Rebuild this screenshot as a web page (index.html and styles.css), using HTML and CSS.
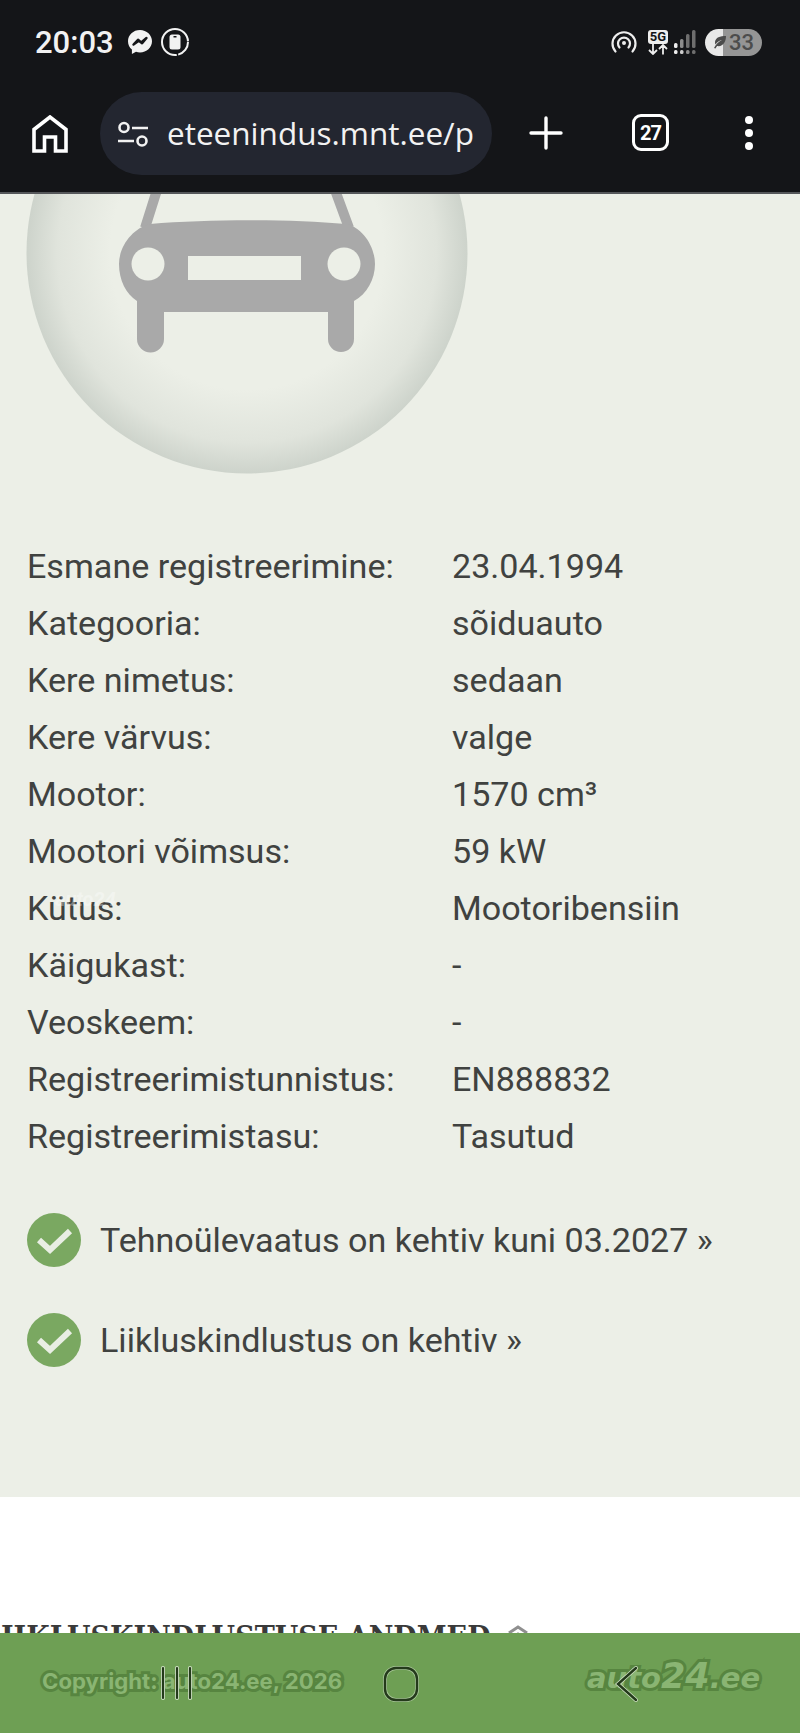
FILE: index.html
```html
<!DOCTYPE html>
<html>
<head>
  <title>auto24.ee</title>
  <link rel="stylesheet" href="styles.css">
</head>
<body>
  <div class="page">

    <header class="phone-top">
      <div class="status-bar">
        <span class="clock">20:03</span>
        <svg class="status-messenger" width="26" height="26" viewBox="0 0 26 26">
          <path fill="#f2f2f2" d="M13 1C6.300 1 1 5.900 1 12.300c0 3.400 1.500 6.300 3.900 8.300V25l4.100-2.200c1.300.4 2.600.6 4 .6 6.700 0 12-4.900 12-11.100S19.700 1 13 1z"/>
          <path fill="none" stroke="#141518" stroke-width="2.400" stroke-linejoin="round" stroke-linecap="round" d="M6.500 15.500l4.500-4.800 3.200 2.800 5.300-4.500-4.400 5.300-3.300-2.600z"/>
        </svg>
        <svg class="status-record" width="30" height="30" viewBox="0 0 30 30">
          <circle cx="15" cy="15" r="13" fill="none" stroke="#f2f2f2" stroke-width="2" stroke-dasharray="17 1.500 62 1.500"/>
          <rect x="9.500" y="7.500" width="11" height="15" rx="2.500" fill="#f2f2f2"/>
          <rect x="13.500" y="9" width="3" height="1.500" fill="#141518"/>
        </svg>
        <span class="status-spacer"></span>
        <svg class="status-hotspot" width="26" height="24" viewBox="0 0 26 24">
          <g fill="none" stroke="#eeeeee" stroke-width="2.200" stroke-linecap="round">
            <path d="M4.500 21.500a11.500 11.500 0 1 1 17 0"/>
            <path d="M8.500 17.500a6 6 0 1 1 9 0"/>
          </g>
          <circle cx="13" cy="13" r="2" fill="#eeeeee"/>
        </svg>
        <div class="status-5g">
          <span class="tag-5g">5G</span>
          <svg width="24" height="11" viewBox="0 0 24 11">
            <path fill="none" stroke="#eeeeee" stroke-width="1.800" d="M7 0v9.500M3 6l4 4 4-4M17 10.500V1.500M13 5l4-4 4 4"/>
          </svg>
        </div>
        <svg class="status-signal" width="24" height="26" viewBox="0 0 24 26">
          <rect x="1" y="14" width="3.500" height="5" rx="1.500" fill="#eeeeee"/>
          <rect x="1" y="21" width="3.500" height="4" rx="1.500" fill="#eeeeee"/>
          <rect x="7" y="10" width="3.500" height="9" rx="1.500" fill="#8c8c8c"/>
          <rect x="7" y="21" width="3.500" height="4" rx="1.500" fill="#cccccc"/>
          <rect x="13" y="5" width="3.500" height="14" rx="1.500" fill="#6e6e6e"/>
          <rect x="13" y="21" width="3.500" height="4" rx="1.500" fill="#8c8c8c"/>
          <rect x="19" y="1" width="3.500" height="18" rx="1.500" fill="#6e6e6e"/>
          <rect x="19" y="21" width="3.500" height="4" rx="1.500" fill="#6e6e6e"/>
        </svg>
        <div class="battery">
          <svg class="battery-leaf" width="15" height="14" viewBox="0 0 15 14">
            <path fill="#4c4c4c" d="M14 1C8 1 3.500 2.500 3 7c-.1 1 .2 2 .6 2.600C5 7 7.500 5.500 10 5 7 6.500 4 9 2 13l1.500.6c.5-1 1-1.900 1.600-2.600C11 12 14 7 14 1z"/>
          </svg>
          <span class="battery-level">33</span>
        </div>
      </div>

      <div class="toolbar">
        <svg class="tool-home" width="36" height="38" viewBox="0 0 36 38">
          <path fill="none" stroke="#fff" stroke-width="3.600" d="M2 36V14.500L18 2l16 12.500V36H23.500V22h-11v14z"/>
        </svg>
        <div class="url-bar">
          <svg class="url-tune" width="32" height="26" viewBox="0 0 32 26">
            <g fill="none" stroke="#f2f2f2" stroke-width="2.600">
              <circle cx="7" cy="6.500" r="4.500"/>
              <path d="M15 7h16M1 20h16"/>
              <circle cx="25" cy="20" r="4.500"/>
            </g>
          </svg>
          <span class="url-text">eteenindus.mnt.ee/p</span>
        </div>
        <svg class="tool-plus" width="34" height="34" viewBox="0 0 34 34">
          <path stroke="#fff" stroke-width="3.400" stroke-linecap="round" d="M17 2v30M2 17h30"/>
        </svg>
        <div class="tab-count">27</div>
        <div class="tool-menu">
          <span></span><span></span><span></span>
        </div>
      </div>
    </header>

    <main class="content">
      <section class="vehicle">
        <svg class="vehicle-picture" width="500" height="300" viewBox="0 194 500 300">
          <defs>
            <radialGradient id="discShade" cx="247" cy="253" r="220.500" gradientUnits="userSpaceOnUse">
              <stop offset="0.62" stop-color="#ecefe7"/>
              <stop offset="0.86" stop-color="#e0e4dc"/>
              <stop offset="1" stop-color="#cdd3cb"/>
            </radialGradient>
          </defs>
          <circle cx="247" cy="253" r="220.500" fill="url(#discShade)"/>
          <path fill="none" stroke="#a9a9a9" stroke-width="10" d="M145 228l12-38M349 228l-14-38"/>
          <path fill="#a9a9a9" d="M150 224c60-5 140-5 196 0 16 3 29 22 29 40 0 15-8 30-21 37v38a13 13 0 0 1-26 0v-27H164v27a13.500 13.500 0 0 1-27 0v-38c-11-7-18-21-18-37 0-18 14-36 31-40z"/>
          <circle cx="148" cy="264" r="16.500" fill="#ecefe7"/>
          <circle cx="344" cy="264" r="16.500" fill="#ecefe7"/>
          <rect x="188" y="256" width="113" height="24" fill="#ecefe7"/>
        </svg>

        <div class="specs">
          <span class="watermark">auto24</span>
          <div class="spec-row"><span>Esmane registreerimine:</span><span>23.04.1994</span></div>
          <div class="spec-row"><span>Kategooria:</span><span>sõiduauto</span></div>
          <div class="spec-row"><span>Kere nimetus:</span><span>sedaan</span></div>
          <div class="spec-row"><span>Kere värvus:</span><span>valge</span></div>
          <div class="spec-row"><span>Mootor:</span><span>1570 cm³</span></div>
          <div class="spec-row"><span>Mootori võimsus:</span><span>59 kW</span></div>
          <div class="spec-row"><span>Kütus:</span><span>Mootoribensiin</span></div>
          <div class="spec-row"><span>Käigukast:</span><span>-</span></div>
          <div class="spec-row"><span>Veoskeem:</span><span>-</span></div>
          <div class="spec-row"><span>Registreerimistunnistus:</span><span>EN888832</span></div>
          <div class="spec-row"><span>Registreerimistasu:</span><span>Tasutud</span></div>
        </div>

        <div class="checks">
          <div class="check-row">
            <svg width="54" height="54" viewBox="0 0 54 54">
              <circle cx="27" cy="27" r="27" fill="#7aa861"/>
              <path fill="none" stroke="#e9eee4" stroke-width="6" d="M12 27l11 10 20-19"/>
            </svg>
            <span>Tehnoülevaatus on kehtiv kuni 03.2027 »</span>
          </div>
          <div class="check-row">
            <svg width="54" height="54" viewBox="0 0 54 54">
              <circle cx="27" cy="27" r="27" fill="#7aa861"/>
              <path fill="none" stroke="#e9eee4" stroke-width="6" d="M12 27l11 10 20-19"/>
            </svg>
            <span>Liikluskindlustus on kehtiv »</span>
          </div>
        </div>
      </section>

      <section class="insurance">
        <h2>LIIKLUSKINDLUSTUSE ANDMED</h2>
        <svg class="insurance-toggle" width="22" height="20" viewBox="0 0 22 20">
          <path fill="none" stroke="#8f8f8f" stroke-width="3" d="M2 9l9-6 9 6M2 16l9-6 9 6"/>
        </svg>
      </section>
    </main>

    <footer class="nav-bar">
      <span class="copyright">Copyright: auto24.ee, 2026</span>
      <span class="logo">auto<span class="logo-num">24</span>.ee</span>
      <div class="nav-buttons">
        <svg width="40" height="36" viewBox="0 0 40 36">
          <path fill="none" stroke="#cfe0c4" stroke-width="4" stroke-linecap="round" d="M6 3v30M20 3v30M33 3v30"/>
          <path fill="none" stroke="#243a1b" stroke-width="2.200" stroke-linecap="round" d="M6 3v30M20 3v30M33 3v30"/>
        </svg>
        <svg width="38" height="38" viewBox="0 0 38 38">
          <rect x="3" y="3" width="32" height="32" rx="11" fill="none" stroke="#a9c79a" stroke-width="4"/>
          <rect x="3" y="3" width="32" height="32" rx="11" fill="none" stroke="#243a1b" stroke-width="2.400"/>
        </svg>
        <svg class="nav-back" width="26" height="38" viewBox="0 0 26 38">
          <path fill="none" stroke="#cfe0c4" stroke-width="4" stroke-linecap="round" d="M22 3L4 19l18 16"/>
          <path fill="none" stroke="#243a1b" stroke-width="2.400" stroke-linecap="round" d="M22 3L4 19l18 16"/>
        </svg>
      </div>
    </footer>

  </div>
</body>
</html>
```

FILE: styles.css
```css
body {
  margin: 0;
  background-color: white;
  font-family: Roboto, Arial, sans-serif;
}

.page {
  width: 800px;
  height: 1733px;
  display: flex;
  flex-direction: column;
  overflow: hidden;
}

/* phone status bar + browser toolbar */

.phone-top {
  height: 192px;
  background-color: #141518;
  border-bottom: 2px solid #55575a;
  flex-shrink: 0;
  color: white;
}

.status-bar {
  height: 84px;
  display: flex;
  align-items: center;
  padding: 0 38px 0 35px;
  box-sizing: border-box;
}

.clock {
  font-size: 31px;
  font-weight: 500;
  color: #f2f2f2;
  width: 92px;
}

.status-messenger {
  margin-right: 7px;
}

.status-spacer {
  flex: 1;
}

.status-hotspot {
  margin-right: 9px;
}

.status-5g {
  display: flex;
  flex-direction: column;
  align-items: center;
  width: 24px;
  margin-right: 3px;
}

.tag-5g {
  background-color: #eeeeee;
  color: #141518;
  font-size: 13px;
  font-weight: 700;
  line-height: 14px;
  padding: 0 2px;
  border-radius: 3px;
}

.status-signal {
  margin-right: 8px;
}

.battery {
  width: 57px;
  height: 27px;
  border-radius: 14px;
  background: linear-gradient(to right, #e8e8e8 0, #e8e8e8 32%, #959595 32%, #959595 100%);
  display: flex;
  align-items: center;
  padding-left: 7px;
  box-sizing: border-box;
}

.battery-leaf {
  flex-shrink: 0;
}

.battery-level {
  font-size: 22px;
  font-weight: 500;
  color: #4c4c4c;
  margin-left: 2px;
}

.toolbar {
  height: 107px;
  display: flex;
  align-items: flex-start;
  padding-top: 8px;
  box-sizing: border-box;
  position: relative;
}

.tool-home {
  margin: 23px 32px 0 32px;
}

.url-bar {
  width: 392px;
  height: 83px;
  border-radius: 42px;
  background-color: #232630;
  display: flex;
  align-items: center;
  padding-left: 17px;
  box-sizing: border-box;
}

.url-tune {
  margin-right: 18px;
}

.url-text {
  font-family: "Open Sans", Arial, sans-serif;
  font-size: 31.500px;
  color: #f2f2f2;
  white-space: nowrap;
  margin-bottom: 2px;
}

.tool-plus {
  margin: 24px 0 0 37px;
}

.tab-count {
  width: 37px;
  height: 37px;
  margin: 22px 0 0 69px;
  border: 3.500px solid white;
  border-radius: 9px;
  box-sizing: border-box;
  display: flex;
  align-items: center;
  justify-content: center;
  font-size: 20px;
  font-weight: 700;
  letter-spacing: -1px;
}

.tool-menu {
  display: flex;
  flex-direction: column;
  gap: 5px;
  margin: 24px 0 0 76px;
}

.tool-menu span {
  width: 8px;
  height: 8px;
  border-radius: 50%;
  background-color: white;
}

/* page content */

.content {
  flex: 1;
  min-height: 0;
  overflow: hidden;
  color: #404240;
}

.vehicle {
  height: 1303px;
  background-color: #ecefe7;
  box-sizing: border-box;
}

.vehicle-picture {
  display: block;
}

.specs {
  margin-top: 44px;
  padding-left: 27px;
  position: relative;
}

.spec-row {
  display: grid;
  grid-template-columns: 425px 1fr;
  font-size: 34.100px;
  line-height: 57px;
}

.watermark {
  position: absolute;
  left: 55px;
  top: 349px;
  font-size: 20px;
  font-style: italic;
  font-weight: 700;
  color: rgba(255, 255, 255, 0.35);
}

.checks {
  margin-top: 48px;
  padding-left: 27px;
  display: flex;
  flex-direction: column;
  gap: 46px;
}

.check-row {
  display: flex;
  align-items: center;
  gap: 19px;
  font-size: 34.100px;
}

.insurance {
  display: flex;
  align-items: flex-start;
  gap: 16px;
  margin: 122px 0 0 -18px;
}

.insurance h2 {
  margin: 0;
  font-family: "DejaVu Serif", serif;
  font-size: 30px;
  font-stretch: condensed;
  font-weight: 700;
  color: #3a3a3a;
  white-space: nowrap;
}

.insurance-toggle {
  margin-top: 5px;
}

/* bottom green bar with phone buttons on top */

.nav-bar {
  height: 100px;
  flex-shrink: 0;
  background-color: #6e9f54;
  position: relative;
}

.copyright,
.logo {
  position: absolute;
  color: #8ab573;
  font-weight: 700;
  white-space: nowrap;
  -webkit-text-stroke: 6px #578540;
  paint-order: stroke fill;
}

.copyright {
  left: 42px;
  top: 34px;
  font-family: Inter, Arial, sans-serif;
  font-size: 22.200px;
}

.logo {
  left: 587px;
  top: 26px;
  font-family: "DejaVu Sans", Arial, sans-serif;
  font-size: 29px;
  font-style: italic;
}

.logo-num {
  font-size: 35px;
  line-height: 1;
}

.nav-buttons {
  position: absolute;
  left: 157px;
  top: 32px;
  display: flex;
  gap: 185px;
}

.nav-back {
  margin-left: 9px;
}
```
